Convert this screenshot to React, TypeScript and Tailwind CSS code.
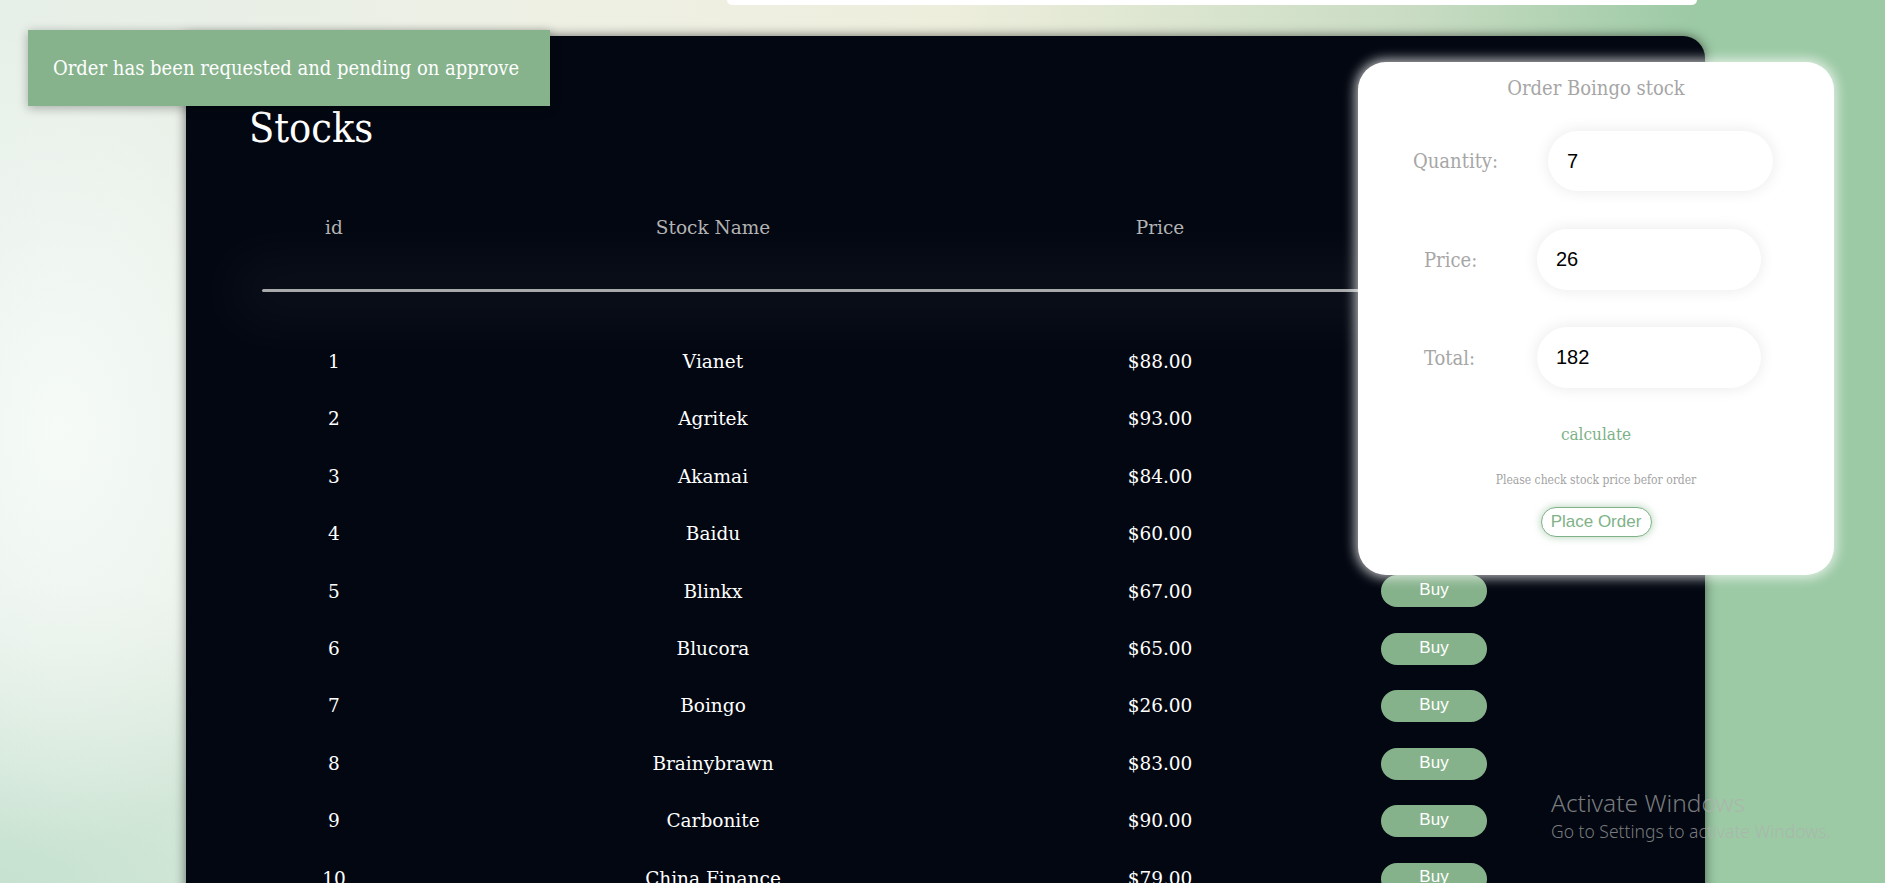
import { useState } from "react";

type Stock = {
    id: number;
    name: string;
    price: number;
};

const stocks: Stock[] = [
    { id: 1, name: "Vianet", price: 88 },
    { id: 2, name: "Agritek", price: 93 },
    { id: 3, name: "Akamai", price: 84 },
    { id: 4, name: "Baidu", price: 60 },
    { id: 5, name: "Blinkx", price: 67 },
    { id: 6, name: "Blucora", price: 65 },
    { id: 7, name: "Boingo", price: 26 },
    { id: 8, name: "Brainybrawn", price: 83 },
    { id: 9, name: "Carbonite", price: 90 },
    { id: 10, name: "China Finance", price: 79 },
];

const serif = "font-['DejaVu_Serif_Condensed','DejaVu_Serif',serif]";
const serifWide = "font-['DejaVu_Serif',serif]";
const sans = "font-['Liberation_Sans',Arial,sans-serif]";

export default function App() {
    const [quantity] = useState("7");
    const [price] = useState("26");
    const [total] = useState("182");

    return (
        <div className={`relative h-[883px] overflow-hidden bg-[radial-gradient(ellipse_260px_420px_at_60px_430px,#f6fbf8_0%,rgba(246,251,248,0)_100%),radial-gradient(ellipse_700px_300px_at_0px_883px,rgba(196,225,206,0.95)_0%,rgba(196,225,206,0)_100%),linear-gradient(90deg,#e6efe8_0%,#eef0e4_30%,#eeeedd_50%,#c9dcc3_75%,#9ccaa5_90%)] ${serif}`}>
            {/* top nav, mostly scrolled away */}
            <div className="ml-[727px] h-[5px] w-[970px] rounded-b-[18px] bg-white" />

            <main className="ml-[186px] mt-[31px] w-[1519px] rounded-tr-[22px] bg-[#020711] pl-[63px] pt-[68px] pb-10 shadow-[0_0_12px_rgba(0,0,0,0.55)]">
                <h2 className="text-[41px] leading-[48px] text-white">Stocks</h2>

                <div className={`ml-[13px] mt-[64px] w-[1306px] ${serifWide}`}>
                    <div className="grid grid-cols-[144px_614px_280px_268px] text-center text-[18.5px] leading-[24px] text-[#b3b3b3]">
                        <div>id</div>
                        <div>Stock Name</div>
                        <div>Price</div>
                        <div>Action</div>
                    </div>

                    <div className="mt-[49px] h-[3px] rounded-full bg-[#a8a9ab] shadow-[0_0_60px_30px_rgba(255,255,255,0.045)]" />

                    <div className="mt-[41px]">
                        {stocks.map((stock) => (
                            <div
                                key={stock.id}
                                className="grid h-[57.45px] grid-cols-[144px_614px_280px_268px] items-center text-center text-[18.5px] text-white"
                            >
                                <div>{stock.id}</div>
                                <div>{stock.name}</div>
                                <div>${stock.price.toFixed(2)}</div>
                                <div className="flex justify-center">
                                    <button className={`h-[32px] w-[106px] rounded-[16px] bg-[#86b28b] pb-[3px] text-[17px] text-white ${sans}`}>
                                        Buy
                                    </button>
                                </div>
                            </div>
                        ))}
                    </div>
                </div>
            </main>

            {/* toast */}
            <div className="absolute left-[28px] top-[30px] flex h-[76px] w-[522px] items-center bg-[#86b38c] pl-[25px] text-[20px] text-white shadow-[0_2px_10px_rgba(0,0,0,0.3)]">
                Order has been requested and pending on approve
            </div>

            {/* order modal */}
            <div className="absolute left-[1358px] top-[62px] flex h-[513px] w-[476px] flex-col items-center rounded-[28px] bg-white pt-[14px] shadow-[0_0_12px_3px_rgba(255,255,255,0.7)]">
                <h3 className="text-[20px] leading-[24px] text-[#a6a6a6]">Order Boingo stock</h3>

                <div className="mt-[31px] flex w-full items-center pl-[55px]">
                    <label className="w-[135px] text-[20px] text-[#a6a6a6]">Quantity:</label>
                    <input
                        readOnly
                        value={quantity}
                        className={`h-[60px] w-[225px] rounded-full bg-white pl-[19px] text-[20px] text-black shadow-[0_0_16px_rgba(0,0,0,0.09)] outline-none ${sans}`}
                    />
                </div>

                <div className="mt-[38px] flex w-full items-center pl-[66px]">
                    <label className="w-[113px] text-[20px] text-[#a6a6a6]">Price:</label>
                    <input
                        readOnly
                        value={price}
                        className={`h-[61px] w-[224px] rounded-full bg-white pl-[19px] text-[20px] text-black shadow-[0_0_16px_rgba(0,0,0,0.09)] outline-none ${sans}`}
                    />
                </div>

                <div className="mt-[37px] flex w-full items-center pl-[66px]">
                    <label className="w-[113px] text-[20px] text-[#a6a6a6]">Total:</label>
                    <input
                        readOnly
                        value={total}
                        className={`h-[61px] w-[224px] rounded-full bg-white pl-[19px] text-[20px] text-black shadow-[0_0_16px_rgba(0,0,0,0.09)] outline-none ${sans}`}
                    />
                </div>

                <button className="mt-[34px] text-[17px] leading-[24px] text-[#7db187]">calculate</button>

                <p className="mt-[26px] text-[12px] leading-[16px] text-[#a3a3a3]">Please check stock price befor order</p>

                <button className={`mt-[19px] h-[30px] w-[111px] rounded-full border border-[#7fb287] bg-white text-[17px] text-[#7fb287] shadow-[0_0_8px_rgba(127,178,135,0.6)] ${sans}`}>
                    Place Order
                </button>
            </div>

            {/* activation watermark */}
            <div className="pointer-events-none absolute left-[1551px] top-[787px] z-10 font-['Noto_Sans',sans-serif] text-[rgba(175,175,175,0.7)]">
                <div className="text-[24.5px] font-light leading-[32px]">Activate Windows</div>
                <div className="text-[17.5px] font-light leading-[24px]">Go to Settings to activate Windows.</div>
            </div>
        </div>
    );
}
